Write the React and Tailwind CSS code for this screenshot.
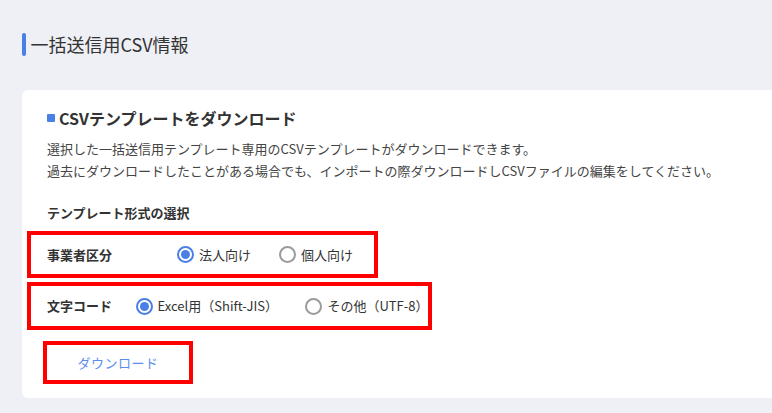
const FONT = { fontFamily: '"Noto Sans CJK JP", "Noto Sans", sans-serif' };

function Radio({ checked, label }) {
  return (
    <label className="flex items-center gap-[5px] text-[13px] text-[#333]">
      {checked ? (
        <span className="w-[17px] h-[17px] rounded-full border-2 border-[#4a7fe5] flex items-center justify-center">
          <span className="w-[9px] h-[9px] rounded-full bg-[#4a7fe5]"></span>
        </span>
      ) : (
        <span className="w-[17px] h-[17px] rounded-full border-2 border-[#9a9a9a]"></span>
      )}
      <span>{label}</span>
    </label>
  );
}

export default function App() {
  return (
    <div className="w-[772px] h-[413px] overflow-hidden bg-[#eef0f5] pl-[22px]" style={FONT}>
      {/* Page title */}
      <div className="flex items-center h-[24px] mt-[32px]">
        <div className="w-[3.5px] h-[23px] bg-[#4a7fe5] rounded-sm"></div>
        <h1 className="ml-[5px] text-[18px] text-[#333] leading-6">一括送信用CSV情報</h1>
      </div>

      {/* Card */}
      <div className="mt-[34px] w-[800px] bg-white rounded-md px-[5px] pt-[16px] pb-[14px]">
        <div className="pl-[20px]">
          <div className="flex items-center h-6">
            <span className="w-2 h-2 bg-[#4a7fe5] rounded-[1px]"></span>
            <h2 className="ml-[4px] text-[16px] font-bold text-[#333]">CSVテンプレートをダウンロード</h2>
          </div>
          <div className="mt-[8px] text-[13px] leading-[22px] text-[#444]">
            <p>選択した一括送信用テンプレート専用のCSVテンプレートがダウンロードできます。</p>
            <p>過去にダウンロードしたことがある場合でも、インポートの際ダウンロードしCSVファイルの編集をしてください。</p>
          </div>
          <h3 className="mt-[21px] text-[13px] leading-5 font-bold text-[#333]">テンプレート形式の選択</h3>
        </div>

        {/* Options */}
        <div className="mt-[8px] flex flex-col gap-[4px]">
          <div className="w-[351px] h-[47px] border-4 border-[#ff0000] flex items-center pl-[16px]">
            <span className="w-[130px] text-[13px] font-bold text-[#333]">事業者区分</span>
            <div className="flex items-center gap-[28px]">
              <Radio checked label="法人向け" />
              <Radio label="個人向け" />
            </div>
          </div>
          <div className="w-[405px] h-[48px] border-4 border-[#ff0000] flex items-center pl-[16px]">
            <span className="w-[89px] text-[13px] font-bold text-[#333]">文字コード</span>
            <div className="flex items-center gap-[28px]">
              <Radio checked label="Excel用（Shift-JIS）" />
              <Radio label="その他（UTF-8）" />
            </div>
          </div>
        </div>

        {/* Download button */}
        <div className="mt-[11px] ml-[16px] w-[150px] h-[43px] border-4 border-[#ff0000] flex items-center justify-center">
          <button className="text-[13px] text-[#5b8def] tracking-[0.5px]">ダウンロード</button>
        </div>
      </div>
    </div>
  );
}
